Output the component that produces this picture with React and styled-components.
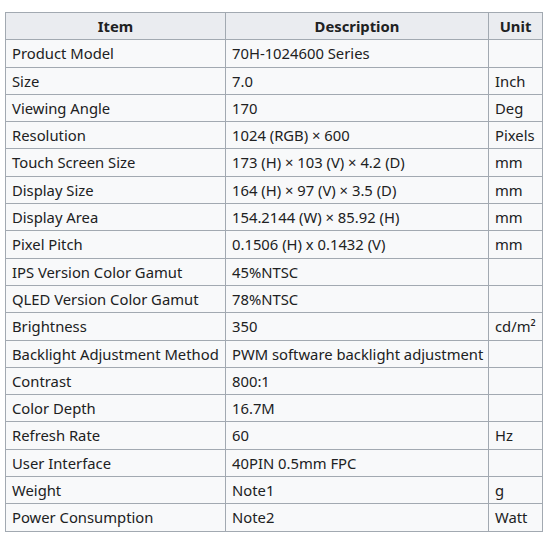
import React from 'react';
import styled, { createGlobalStyle } from 'styled-components';

const GlobalStyle = createGlobalStyle`
  body {
    margin: 0;
    background: #ffffff;
    font-family: "Noto Sans", "Open Sans", sans-serif;
    color: #202122;
  }
`;

const Page = styled.main`
  padding: 12px 0 0 5px;
`;

const SpecTable = styled.table`
  width: 537px;
  table-layout: fixed;
  border-collapse: collapse;
  background-color: #f8f9fa;
  border: 1px solid #a2a9b1;
  font-size: 14.8px;
`;

const HeadCell = styled.th`
  background-color: #eaecf0;
  border: 1px solid #a2a9b1;
  padding: 3px 6px;
  line-height: 20.3px;
  font-weight: bold;
  text-align: center;
`;

const Cell = styled.td`
  border: 1px solid #a2a9b1;
  padding: 3px 6px;
  line-height: 20.3px;
  white-space: nowrap;
`;

const specData = [
  ['Product Model', '70H-1024600 Series', ''],
  ['Size', '7.0', 'Inch'],
  ['Viewing Angle', '170', 'Deg'],
  ['Resolution', '1024 (RGB) × 600', 'Pixels'],
  ['Touch Screen Size', '173 (H) × 103 (V) × 4.2 (D)', 'mm'],
  ['Display Size', '164 (H) × 97 (V) × 3.5 (D)', 'mm'],
  ['Display Area', '154.2144 (W) × 85.92 (H)', 'mm'],
  ['Pixel Pitch', '0.1506 (H) x 0.1432 (V)', 'mm'],
  ['IPS Version Color Gamut', '45%NTSC', ''],
  ['QLED Version Color Gamut', '78%NTSC', ''],
  ['Brightness', '350', 'cd/m²'],
  ['Backlight Adjustment Method', 'PWM software backlight adjustment', ''],
  ['Contrast', '800:1', ''],
  ['Color Depth', '16.7M', ''],
  ['Refresh Rate', '60', 'Hz'],
  ['User Interface', '40PIN 0.5mm FPC', ''],
  ['Weight', 'Note1', 'g'],
  ['Power Consumption', 'Note2', 'Watt'],
];

function App() {
  return (
    <Page>
      <GlobalStyle />
      <SpecTable>
        <colgroup>
          <col style={{ width: '220px' }} />
          <col style={{ width: '263px' }} />
          <col style={{ width: '54px' }} />
        </colgroup>
        <thead>
          <tr>
            <HeadCell>Item</HeadCell>
            <HeadCell>Description</HeadCell>
            <HeadCell>Unit</HeadCell>
          </tr>
        </thead>
        <tbody>
          {specData.map(([item, desc, unit]) => (
            <tr key={item}>
              <Cell>{item}</Cell>
              <Cell>{desc}</Cell>
              <Cell>{unit}</Cell>
            </tr>
          ))}
        </tbody>
      </SpecTable>
    </Page>
  );
}

export default App;
